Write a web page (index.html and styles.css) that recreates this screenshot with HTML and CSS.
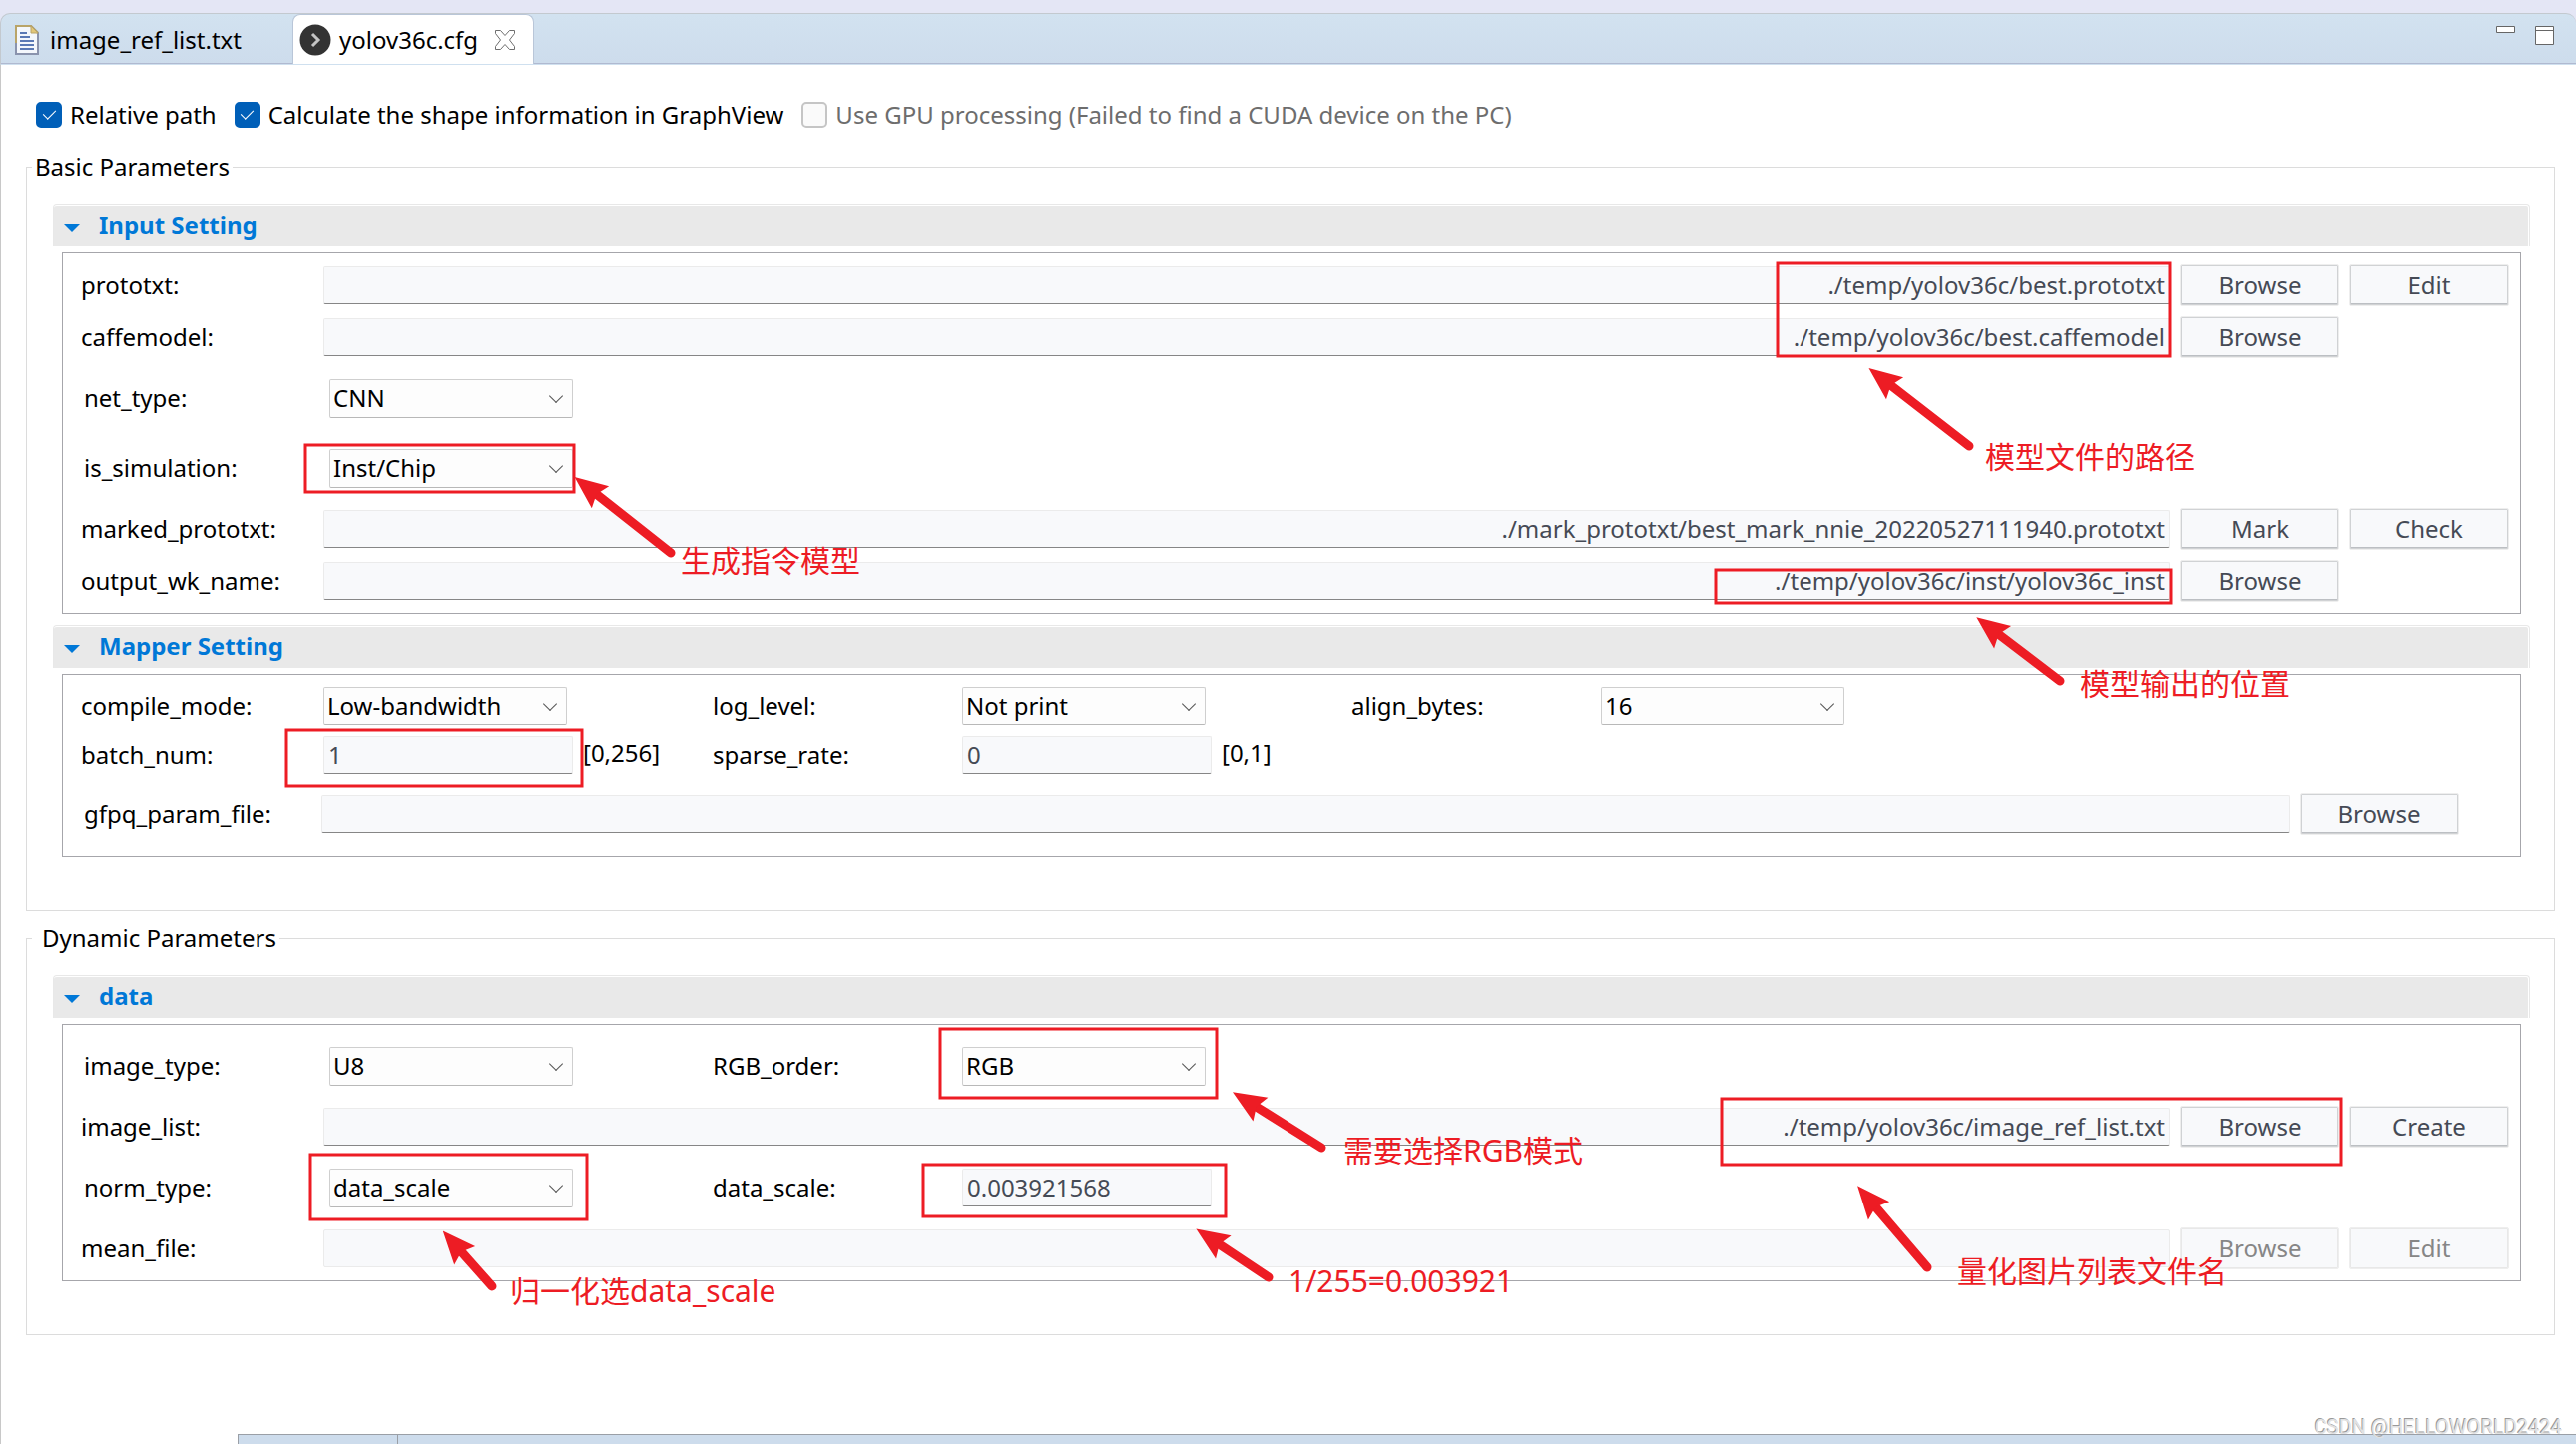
FILE: index.html
```
<!DOCTYPE html>
<html lang="en">

<head>
  <meta charset="utf-8">
  <title>yolov36c.cfg</title>
  <link rel="stylesheet" href="styles.css">
</head>

<body>
  <header class="tab-bar">
    <button class="tab" type="button">
      <svg class="file-icon" width="24" height="30" viewBox="0 0 24 30">
        <path d="M1 1h15l7 7v21H1z" fill="#f4f7fc" stroke="#8a93ad" stroke-width="2" />
        <path d="M1 18V1h15l7 7" fill="none" stroke="#b9a468" stroke-width="2" />
        <path d="M16 1v7h7z" fill="#e3c778" stroke="#b9a468" />
        <path d="M5 8h7M5 12h10M5 16h14M5 20h14M5 24h14" stroke="#5b79b5" stroke-width="2" />
      </svg>
      image_ref_list.txt
    </button>
    <button class="tab active" type="button">
      <svg width="32" height="32" viewBox="0 0 32 32">
        <circle cx="16" cy="16" r="15.5" fill="#333" />
        <path d="M13 10l6 6-6 6" fill="none" stroke="#c4c4c4" stroke-width="3" />
      </svg>
      yolov36c.cfg
      <svg class="close-icon" width="22" height="22" viewBox="0 0 22 22">
        <path d="M1.500 1.500h5l4.500 5 4.500-5h5v3l-5 6.500 5 6.500v3h-5l-4.500-5-4.500 5h-5v-3l5-6.500-5-6.500z" fill="#fff" stroke="#6e6e6e" />
      </svg>
    </button>
    <div class="window-tools">
      <svg width="20" height="20" viewBox="0 0 20 20">
        <path d="M.5.5h18v6H.5z" fill="#fff" stroke="#666" />
      </svg>
      <svg width="20" height="20" viewBox="0 0 20 20">
        <path d="M.5.5h18v18H.5zM.5 4.500h18" fill="#fff" stroke="#666" />
      </svg>
    </div>
  </header>

  <main class="editor">
    <div class="options">
      <label class="check"><input type="checkbox" checked>Relative path</label>
      <label class="check"><input type="checkbox" checked>Calculate the shape information in GraphView</label>
      <label class="check"><input type="checkbox" disabled>Use GPU processing (Failed to find a CUDA device on the PC)</label>
    </div>

    <fieldset class="group">
      <legend>Basic Parameters</legend>
      <details class="section" open>
        <summary>Input Setting</summary>
        <div class="panel">
          <div class="row">
            <label for="prototxt">prototxt:</label>
            <input class="path" id="prototxt" type="text" value="./temp/yolov36c/best.prototxt">
            <button class="btn" type="button">Browse</button>
            <button class="btn" type="button">Edit</button>
          </div>
          <div class="row">
            <label for="caffemodel">caffemodel:</label>
            <input class="path" id="caffemodel" type="text" value="./temp/yolov36c/best.caffemodel">
            <button class="btn" type="button">Browse</button>
          </div>
          <div class="row-indent">
            <label for="net_type">net_type:</label>
            <div class="select"><select id="net_type"><option>CNN</option></select></div>
          </div>
          <div class="row-indent">
            <label for="is_simulation">is_simulation:</label>
            <div class="select"><select id="is_simulation"><option>Inst/Chip</option></select></div>
          </div>
          <div class="row">
            <label for="marked_prototxt">marked_prototxt:</label>
            <input class="path" id="marked_prototxt" type="text" value="./mark_prototxt/best_mark_nnie_20220527111940.prototxt">
            <button class="btn" type="button">Mark</button>
            <button class="btn" type="button">Check</button>
          </div>
          <div class="row">
            <label for="output_wk_name">output_wk_name:</label>
            <input class="path" id="output_wk_name" type="text" value="./temp/yolov36c/inst/yolov36c_inst">
            <button class="btn" type="button">Browse</button>
          </div>
        </div>
      </details>

      <details class="section" open>
        <summary>Mapper Setting</summary>
        <div class="panel mapper">
          <div class="row-wide">
            <label for="compile_mode">compile_mode:</label>
            <div class="select"><select id="compile_mode"><option>Low-bandwidth</option></select></div>
            <label for="log_level">log_level:</label>
            <div class="select"><select id="log_level"><option>Not print</option></select></div>
            <label for="align_bytes">align_bytes:</label>
            <div class="select"><select id="align_bytes"><option>16</option></select></div>
          </div>
          <div class="row-wide">
            <label for="batch_num">batch_num:</label>
            <div class="ranged"><input class="number" id="batch_num" type="text" value="1"><span>[0,256]</span></div>
            <label for="sparse_rate">sparse_rate:</label>
            <div class="ranged"><input class="number" id="sparse_rate" type="text" value="0"><span>[0,1]</span></div>
          </div>
          <div class="row-file">
            <label for="gfpq_param_file">gfpq_param_file:</label>
            <input class="path" id="gfpq_param_file" type="text">
            <button class="btn" type="button">Browse</button>
          </div>
        </div>
      </details>
    </fieldset>

    <fieldset class="group dynamic">
      <legend>Dynamic Parameters</legend>
      <details class="section" open>
        <summary>data</summary>
        <div class="panel">
          <div class="row-indent">
            <label for="image_type">image_type:</label>
            <div class="select"><select id="image_type"><option>U8</option></select></div>
            <label for="rgb_order">RGB_order:</label>
            <div class="select"><select id="rgb_order"><option>RGB</option></select></div>
          </div>
          <div class="row">
            <label for="image_list">image_list:</label>
            <input class="path" id="image_list" type="text" value="./temp/yolov36c/image_ref_list.txt">
            <button class="btn" type="button">Browse</button>
            <button class="btn" type="button">Create</button>
          </div>
          <div class="row-indent">
            <label for="norm_type">norm_type:</label>
            <div class="select"><select id="norm_type"><option>data_scale</option></select></div>
            <label for="data_scale">data_scale:</label>
            <input class="number" id="data_scale" type="text" value="0.003921568">
          </div>
          <div class="row">
            <label for="mean_file">mean_file:</label>
            <input class="path" id="mean_file" type="text" disabled>
            <button class="btn" type="button" disabled>Browse</button>
            <button class="btn" type="button" disabled>Edit</button>
          </div>
        </div>
      </details>
    </fieldset>
  </main>

  <footer class="bottom">
    <div class="bottom-tab"></div>
    <div class="bottom-bar"></div>
  </footer>

  <!-- notes next to the left hand controls -->
  <svg class="notes notes-left" width="1681" height="1447" viewBox="0 0 1681 1447">
    <defs>
      <marker id="arrow-head" markerUnits="userSpaceOnUse" markerWidth="34" markerHeight="30" refX="26" refY="15" orient="auto">
        <path d="M0 15L33 1L28 15L33 29z" fill="#ed1c24" />
      </marker>
    </defs>
    <rect x="306" y="446" width="269" height="47" />
    <rect x="287" y="732" width="296" height="56" />
    <rect x="942" y="1031" width="277" height="69" />
    <rect x="311" y="1157" width="277" height="65" />
    <rect x="925" y="1167" width="303" height="52" />
    <line x1="596" y1="494" x2="672" y2="554" />
    <line x1="1257" y1="1108" x2="1324" y2="1150" />
    <line x1="1220" y1="1246" x2="1271" y2="1280" />
    <line x1="461" y1="1253" x2="493" y2="1289" />
    <text x="682" y="573">生成指令模型</text>
    <text x="1346" y="1164">需要选择RGB模式</text>
    <text x="1291" y="1295">1/255=0.003921</text>
    <text x="511" y="1305">归一化选data_scale</text>
  </svg>

  <!-- notes next to the paths and buttons on the right -->
  <svg class="notes notes-right" width="900" height="1447" viewBox="1681 0 900 1447">
    <rect x="1781" y="264" width="393" height="93" />
    <rect x="1719" y="571" width="456" height="33" />
    <rect x="1725" y="1101" width="621" height="66" />
    <line x1="1893" y1="385" x2="1973" y2="447" />
    <line x1="2001" y1="634" x2="2064" y2="682" />
    <line x1="1878" y1="1208" x2="1931" y2="1270" />
    <text x="1989" y="469">模型文件的路径</text>
    <text x="2084" y="696">模型输出的位置</text>
    <text x="1961" y="1285">量化图片列表文件名</text>
  </svg>

  <div class="watermark">CSDN @HELLOWORLD2424</div>
</body>

</html>
```

FILE: styles.css
```
* {
  box-sizing: border-box;
}

body {
  position: relative;
  display: flex;
  flex-direction: column;
  min-height: 100vh;
  margin: 0;
  padding-top: 13px;
  background: #e4e6f5;
  font-family: "Noto Sans", "Noto Sans CJK SC", sans-serif;
  font-size: 24px;
  line-height: 34px;
  color: #000;
}

button,
input,
select {
  font: inherit;
  color: inherit;
}

/* tabs */
.tab-bar {
  display: flex;
  height: 52px;
  border-top: 1px solid #c3c9cf;
  border-left: 1px solid #c3c9cf;
  border-bottom: 1px solid #cfe0ef;
  border-radius: 10px 10px 0 0;
  background: linear-gradient(#d2e2f0, #cddcec);
  box-shadow: inset 0 -1px #b0b9d0;
}

.tab {
  display: flex;
  align-items: center;
  gap: 11px;
  width: 292px;
  padding: 2px 14px 0;
  border: none;
  background: none;
  white-space: nowrap;
}

.tab.active {
  gap: 8px;
  width: 242px;
  padding: 1px 6px 0;
  border: 1px solid #b9c6d8;
  border-bottom: none;
  border-radius: 8px 8px 0 0;
  background: #fff;
}

.close-icon {
  margin-left: 8px;
}

.window-tools {
  display: flex;
  gap: 19px;
  margin-left: auto;
  padding: 12px 21px;
}

/* editor */
.editor {
  flex: 1;
  padding: 33px 21px 0 25px;
  border-left: 1px solid #c8c8c8;
  background: #fff;
}

.options {
  display: flex;
  gap: 18px;
  padding-left: 10px;
  margin-bottom: 18px;
}

.check {
  display: flex;
  align-items: center;
  gap: 8px;
  white-space: nowrap;
}

.check input {
  appearance: none;
  display: grid;
  place-items: center;
  width: 26px;
  height: 26px;
  margin: 0;
  border: 2px solid #c5c5c5;
  border-radius: 5px;
  background: #fafafa;
}

.check input:checked {
  border-color: #005fb8;
  background: #005fb8;
}

.check input:checked::after {
  content: "";
  width: 6px;
  height: 11px;
  margin-bottom: 4px;
  border: solid #fff;
  border-width: 0 1px 1px 0;
  transform: rotate(45deg);
}

.check:has(input:disabled) {
  color: #6d6d6d;
}

.group {
  min-width: 0;
  margin: 0 0 10px;
  padding: 20px 24px 53px 26px;
  border: 1px solid #dcdcdc;
}

.group legend {
  margin-left: -21px;
  padding: 0 3px;
}

.dynamic legend {
  padding-left: 10px;
}

.section + .section {
  margin-top: 11px;
}

.section summary {
  display: flex;
  align-items: center;
  gap: 19px;
  height: 43px;
  padding: 1px 1px 0 0;
  border: 1px solid #e8e8e8;
  border-bottom: none;
  border-radius: 4px 4px 0 0;
  background: #e9e9e9 content-box;
  color: #0078d7;
  font-weight: bold;
  line-height: 38px;
  align-items: flex-start;
}

.section summary::before {
  content: "";
  margin: 18px 0 0 10px;
  border: 8px solid transparent;
  border-top-color: #0078d7;
  border-bottom: none;
}

.panel {
  display: flex;
  flex-direction: column;
  gap: 10px;
  margin: 6px 9px 0 9px;
  padding: 11px 11px 11px 18px;
  border: 1px solid #a6a6ab;
}

.mapper {
  padding-bottom: 21px;
}

.row {
  display: grid;
  grid-template-columns: 233px 1fr 160px 160px;
  gap: 10px;
  align-items: center;
}

.row-indent {
  display: grid;
  grid-template-columns: 246px 384px 250px 250px;
  align-items: center;
  height: 40px;
  margin: 10px 0;
  padding-left: 3px;
}

.row-wide {
  display: grid;
  grid-template-columns: 243px 390px 250px 390px 250px 1fr;
  align-items: center;
  height: 40px;
}

.row-file {
  display: grid;
  grid-template-columns: 228px 1fr 160px;
  gap: 10px;
  align-items: center;
  margin-top: 8px;
  padding: 0 50px 0 3px;
}

.path,
.number {
  width: 100%;
  height: 38px;
  padding: 0 4px 2px;
  border: 1px solid #ebebeb;
  border-bottom-color: #868686;
  border-radius: 2px;
  background: #f8f9fb;
  color: #454a55;
}

.path {
  text-align: right;
}

.number {
  width: 250px;
}

.path:disabled {
  border-bottom-color: #ebebeb;
}

.ranged {
  display: flex;
  gap: 10px;
}

.select {
  position: relative;
  width: 244px;
  height: 39px;
}

.select select {
  appearance: none;
  width: 100%;
  height: 100%;
  padding: 0 3px 1px;
  border: 1px solid #cfcfcf;
  border-bottom-color: #b8b8b8;
  border-radius: 2px;
  background: #fdfdfd;
}

.select::after {
  content: "";
  position: absolute;
  top: 12px;
  right: 12px;
  width: 9px;
  height: 9px;
  border: solid #555;
  border-width: 0 1px 1px 0;
  transform: rotate(45deg);
  pointer-events: none;
}

.btn {
  height: 42px;
  padding: 0;
  border: 1px solid #eee;
  border-radius: 2px;
  background: #f8f9fb;
  box-shadow: inset 0 0 0 1px #d0d2d4, inset 0 -2px #bcbfc3;
  color: #454a55;
}

.btn:disabled {
  box-shadow: inset 0 0 0 1px #e8e8e8;
  color: #868686;
}

.bottom {
  display: flex;
  height: 10px;
  padding-left: 237px;
  border-left: 1px solid #c8c8c8;
  background: #fff;
}

.bottom-tab,
.bottom-bar {
  border-top: 1px solid #9a9fa6;
  border-left: 1px solid #9a9fa6;
  background: #cddcec;
}

.bottom-tab {
  width: 160px;
}

.bottom-bar {
  flex: 1;
}

/* red notes over the form */
.notes {
  position: absolute;
  top: 0;
  pointer-events: none;
}

.notes-left {
  left: 0;
}

.notes-right {
  right: 0;
}

.notes rect {
  fill: none;
  stroke: #ed1c24;
  stroke-width: 3px;
}

.notes line {
  stroke: #ed1c24;
  stroke-width: 9px;
  stroke-linecap: round;
  marker-start: url(#arrow-head);
}

.notes text {
  fill: #ed1c24;
  font-size: 30px;
}

.watermark {
  position: absolute;
  right: 14px;
  bottom: 0;
  color: #e2e2e2;
  font-family: Roboto, sans-serif;
  font-size: 20px;
  text-shadow: -1px -1px #999;
}
```
